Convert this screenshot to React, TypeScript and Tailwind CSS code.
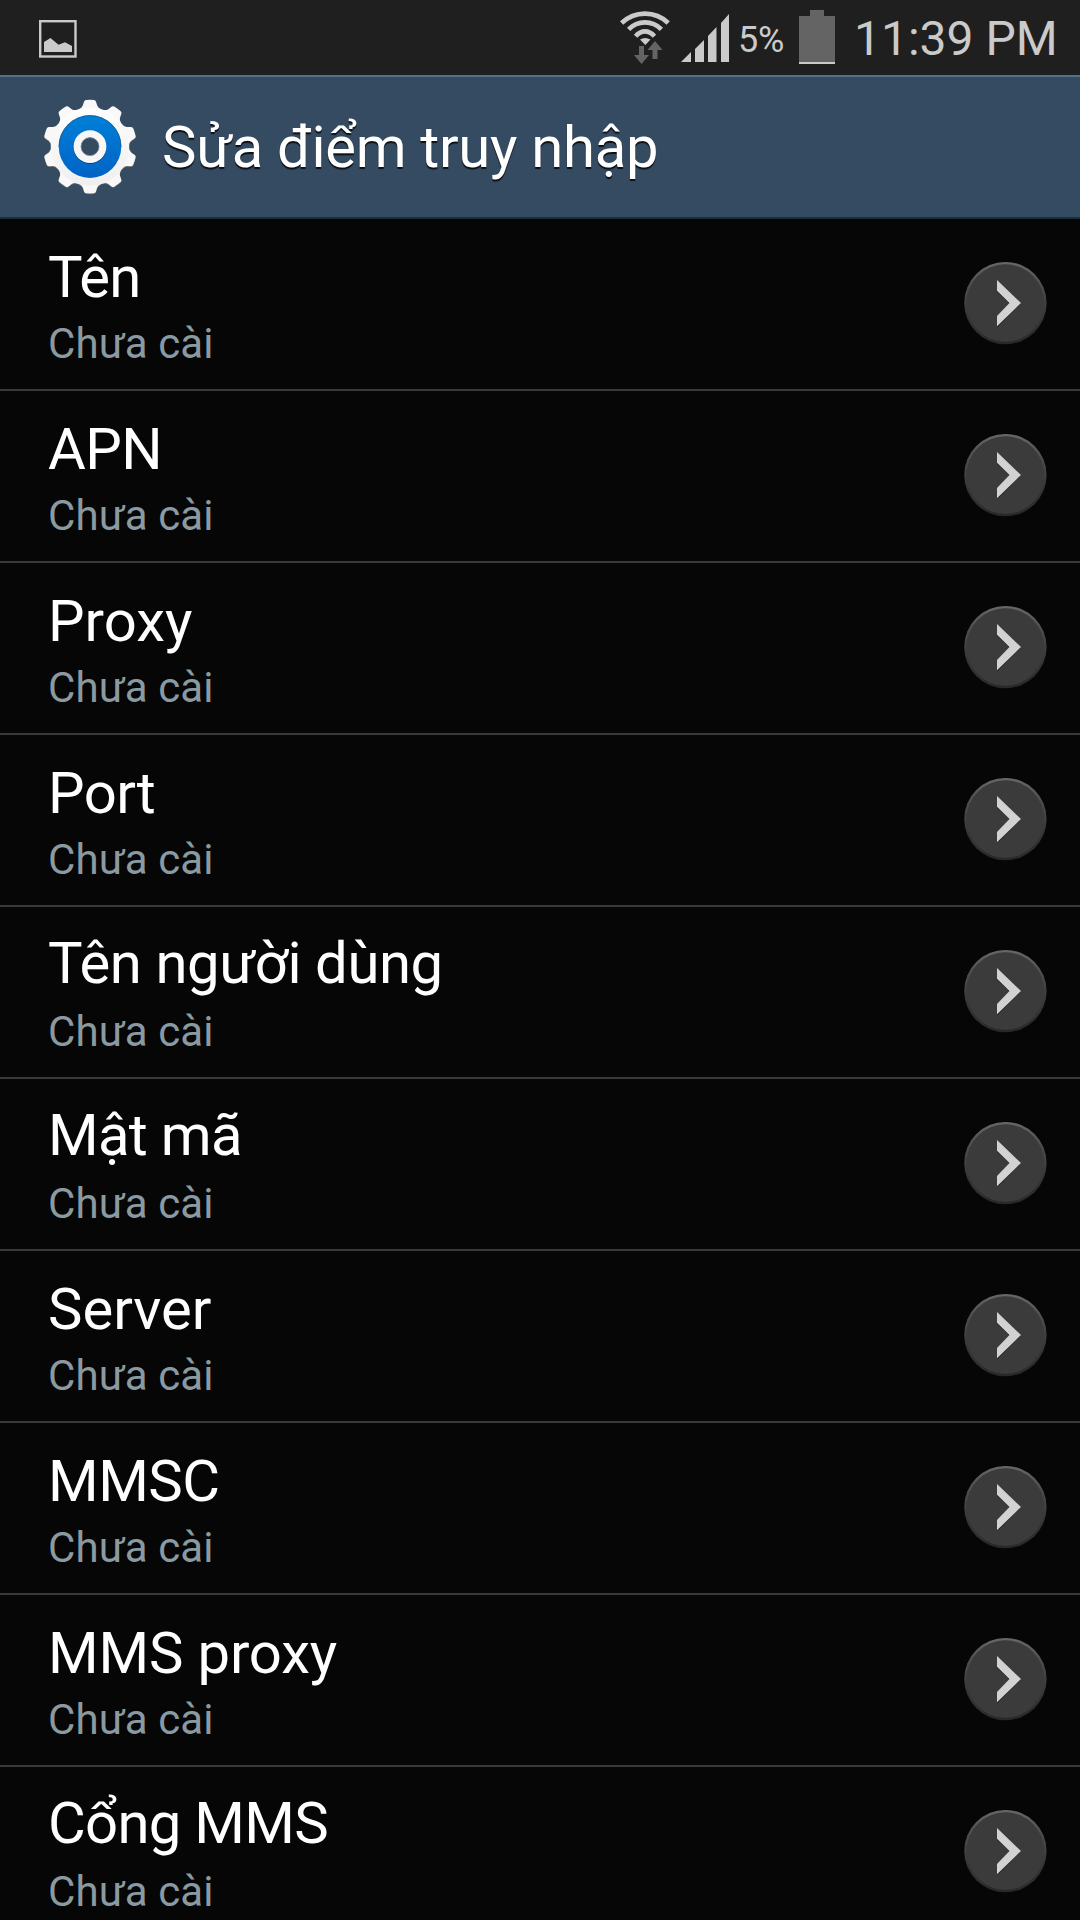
import React from "react";

const rows = [
  { title: "Tên", style: "pt-[24px] tracking-[-0.6px]" },
  { title: "APN", style: "pt-[24px] tracking-[-0.6px]" },
  { title: "Proxy", style: "pt-[24px]" },
  { title: "Port", style: "pt-[24px] tracking-[-0.5px]" },
  { title: "Tên người dùng", style: "pt-[22px] pb-[2px] tracking-[-0.4px]" },
  { title: "Mật mã", style: "pt-[22px] pb-[2px] tracking-[-0.7px]" },
  { title: "Server", style: "pt-[24px]" },
  { title: "MMSC", style: "pt-[24px] tracking-[-0.5px]" },
  { title: "MMS proxy", style: "pt-[24px] tracking-[-0.15px]" },
  { title: "Cổng MMS", style: "pt-[22px] pb-[2px] tracking-[-0.7px]" },
];

const teeth = [0, 36, 72, 108, 144, 180, 216, 252, 288, 324];

function GearIcon() {
  return (
    <svg className="w-[96px] h-[96px] shrink-0" viewBox="-48 -47.6 96 96">
      <defs>
        <linearGradient id="gearWhite" x1="0" y1="-46" x2="0" y2="46" gradientUnits="userSpaceOnUse">
          <stop offset="0" stopColor="#ffffff" />
          <stop offset="1" stopColor="#eeeeee" />
        </linearGradient>
        <linearGradient id="gearBlue" x1="0" y1="0" x2="0" y2="1">
          <stop offset="0" stopColor="#0080d8" />
          <stop offset="1" stopColor="#0063c6" />
        </linearGradient>
        <g id="gearShape">
          <circle r="39.2" />
          {teeth.map((a) => (
            <path key={a} transform={`rotate(${a})`}
              d="M-11 -37.5 Q-8.2 -38.5 -7.2 -41 L-5.9 -45.2 Q-5.3 -46.6 -4 -46.7 Q0 -47 4 -46.7 Q5.3 -46.6 5.9 -45.2 L7.2 -41 Q8.2 -38.5 11 -37.5 Z" />
          ))}
        </g>
      </defs>
      <use href="#gearShape" y="0.8" fill="#6b6b6b" />
      <use href="#gearShape" fill="#f8f8f8" />
      <circle r="39" fill="url(#gearWhite)" />
      <circle r="31.3" fill="url(#gearBlue)" />
      <path d="M-31 0A31 31 0 0 1 31 0" fill="none" stroke="#16588a" strokeWidth="0.8" />
      <circle cy="0.9" r="12.7" fill="none" stroke="#0a3f78" strokeWidth="7.4" />
      <circle r="12.7" fill="none" stroke="#f7f7f7" strokeWidth="7.4" />
      <circle r="9" fill="#344b62" stroke="#8a8f94" strokeWidth="0.8" />
    </svg>
  );
}

function StatusBar() {
  return (
    <div className="h-[75px] bg-[#1f1f1f] flex items-start text-[#cacaca]">
      {/* Screenshot notification */}
      <svg className="ml-[39px] mt-[20px] w-[38px] h-[38px]" viewBox="0 0 38 38">
        <rect x="1.2" y="1.2" width="35.3" height="35.3" fill="none" stroke="#cacaca" strokeWidth="2.4" />
        <path d="M5 32V22L11.5 18L19.5 24.8L26 22.3L33 26V32Z" fill="#cacaca" />
      </svg>

      {/* Wi-Fi with traffic arrows */}
      <svg className="ml-[541px] mt-[9px] w-[54px] h-[58px]" viewBox="0 0 54 58">
        <g fill="none" stroke="#cacaca" strokeWidth="4.6">
          <path d="M3.6 14Q13.5 4.6 27 4.6Q40.5 4.6 50.2 14" />
          <path d="M10.6 20.4Q17.5 13.4 27 13.4Q36.5 13.4 43.4 20.4" />
          <path d="M17.6 27.2Q22 22.4 27 22.4Q32 22.4 36.5 27.2" />
        </g>
        <path d="M22 30.6Q27 27.4 32.5 30.6L27.3 36Z" fill="#cacaca" />
        <path d="M21 37H26V46H31L23.5 55L16 46H21Z" fill="#646464" />
        <path d="M37 32L44.5 41H39.5V50H34.5V41H29.5Z" fill="#646464" />
      </svg>

      {/* Signal strength */}
      <svg className="ml-[8px] mt-[14px] w-[50px] h-[49px]" viewBox="0 0 50 49" fill="#cacaca">
        <path d="M1 48L11 38V48Z" />
        <path d="M15 48V35L24 26V48Z" />
        <path d="M28 48V22L36.5 13V48Z" />
        <path d="M41 48V9L49 0V48Z" />
      </svg>

      <span className="ml-[8px] mt-[19px] w-[50px] text-[36px] leading-[42px] tracking-[-0.3px] whitespace-nowrap">5%</span>

      {/* Battery */}
      <svg className="ml-[10px] mt-[10px] w-[37px] h-[54px]" viewBox="0 0 37 54">
        <path d="M12 0H26V6H37V52H1V6H12Z" fill="#646464" />
        <rect x="1" y="52" width="36" height="2" fill="#cacaca" />
      </svg>

      <span className="ml-[19px] mt-[11px] text-[48px] leading-[56px] whitespace-nowrap">11:39 PM</span>
    </div>
  );
}

function ArrowButton() {
  return (
    <svg className="w-[84px] h-[84px] shrink-0" viewBox="0 0 84 84">
      <defs>
        <linearGradient id="rim" x1="0" y1="0" x2="0" y2="1">
          <stop offset="0" stopColor="#686868" />
          <stop offset="0.3" stopColor="#4c4c4c" />
          <stop offset="0.7" stopColor="#343434" />
          <stop offset="1" stopColor="#282828" />
        </linearGradient>
      </defs>
      <circle cx="41.4" cy="42.1" r="41.2" fill="url(#rim)" />
      <circle cx="41.4" cy="42.1" r="38.8" fill="#3b3b3b" />
      <path d="M33 21L56.5 43L33 66.6V57L46 43L33 31Z" fill="#222222" />
      <path d="M33 19L57 42L33 65.3V54.9L45.5 42L33 29.8Z" fill="#d2d2d2" />
    </svg>
  );
}

export default function App() {
  return (
    <div className="w-[1080px] h-[1920px] overflow-hidden bg-[#060606] font-['Roboto',sans-serif]">
      <StatusBar />

      <header className="h-[144px] flex items-center bg-[#344b62] border-t-2 border-t-[#53718b] border-b-2 border-b-[#1b2e40] pl-[42px]">
        <GearIcon />
        <h1 className="ml-[24px] text-[58px] leading-[68px] tracking-[-0.3px] text-white whitespace-nowrap [text-shadow:0_2px_1px_rgba(0,0,0,0.8)]">
          Sửa điểm truy nhập
        </h1>
      </header>

      <ul>
        {rows.map((row) => (
          <li key={row.title} className="h-[172px] flex items-start justify-between border-b-2 border-[#393939] pl-[48px] pr-[32px]">
            <div>
              <div className={`text-[58px] leading-[68px] text-white whitespace-nowrap ${row.style}`}>{row.title}</div>
              <div className="mt-[7px] text-[42px] leading-[52px] tracking-[0.1px] text-[#8b9aa1]">Chưa cài</div>
            </div>
            <div className="pt-[42px]">
              <ArrowButton />
            </div>
          </li>
        ))}
      </ul>
    </div>
  );
}
